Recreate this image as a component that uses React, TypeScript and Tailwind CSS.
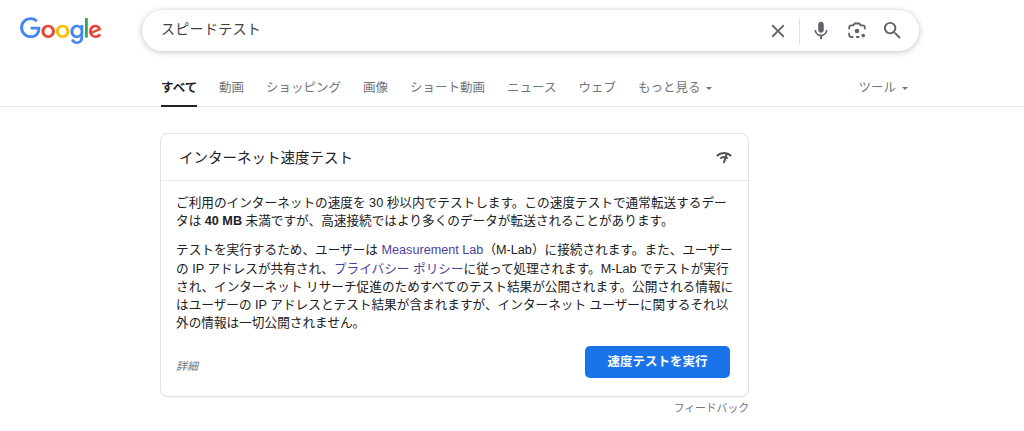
import React from "react";

const Logo = () => (
  <svg viewBox="0 0 272 92" className="w-[82px] h-[28px] shrink-0">
    <path fill="#EA4335" d="M115.75 47.18c0 12.77-9.99 22.18-22.25 22.18s-22.25-9.41-22.25-22.18C71.25 34.32 81.24 25 93.5 25s22.25 9.32 22.25 22.18zm-9.74 0c0-7.98-5.79-13.44-12.51-13.44S80.99 39.2 80.99 47.18c0 7.9 5.79 13.44 12.51 13.44s12.51-5.55 12.51-13.44z" />
    <path fill="#FBBC05" d="M163.75 47.18c0 12.77-9.99 22.18-22.25 22.18s-22.25-9.41-22.25-22.18c0-12.85 9.99-22.18 22.25-22.18s22.25 9.32 22.25 22.18zm-9.74 0c0-7.98-5.79-13.44-12.51-13.44s-12.51 5.46-12.51 13.44c0 7.9 5.79 13.44 12.51 13.44s12.51-5.55 12.51-13.44z" />
    <path fill="#4285F4" d="M209.75 26.34v39.82c0 16.38-9.66 23.07-21.08 23.07-10.75 0-17.22-7.19-19.66-13.07l8.48-3.53c1.51 3.61 5.21 7.87 11.17 7.87 7.31 0 11.84-4.51 11.84-13v-3.19h-.34c-2.18 2.69-6.38 5.04-11.68 5.04-11.09 0-21.25-9.66-21.25-22.09 0-12.52 10.16-22.26 21.25-22.26 5.29 0 9.49 2.35 11.68 4.96h.34v-3.61h9.25zm-8.56 20.92c0-7.81-5.21-13.52-11.84-13.52-6.72 0-12.35 5.71-12.35 13.52 0 7.73 5.63 13.36 12.35 13.36 6.63 0 11.84-5.63 11.84-13.36z" />
    <path fill="#34A853" d="M225 3v65h-9.5V3h9.5z" />
    <path fill="#EA4335" d="M262.02 54.48l7.56 5.04c-2.44 3.61-8.32 9.83-18.48 9.83-12.6 0-22.01-9.74-22.01-22.18 0-13.19 9.49-22.18 20.92-22.18 11.51 0 17.14 9.16 18.98 14.11l1.01 2.52-29.65 12.28c2.27 4.45 5.8 6.72 10.75 6.72 4.96 0 8.4-2.44 10.92-6.14zm-23.27-7.98l19.82-8.23c-1.09-2.77-4.37-4.7-8.23-4.7-4.95 0-11.84 4.37-11.59 12.93z" />
    <path fill="#4285F4" d="M35.29 41.41V32H67c.31 1.64.47 3.58.47 5.68 0 7.06-1.93 15.79-8.15 22.01-6.05 6.3-13.78 9.66-24.02 9.66C16.32 69.35.36 53.89.36 34.91.36 15.93 16.32.47 35.3.47c10.5 0 17.98 4.12 23.6 9.49l-6.64 6.64c-4.03-3.78-9.49-6.72-16.97-6.72-13.86 0-24.7 11.17-24.7 25.03 0 13.86 10.84 25.03 24.7 25.03 8.99 0 14.11-3.61 17.39-6.89 2.66-2.66 4.41-6.46 5.1-11.65l-22.49.01z" />
  </svg>
);

const Caret = () => <span className="inline-block w-0 h-0 border-x-[3px] border-x-transparent border-t-[3.5px] border-t-[#70757a] ml-[6px] mb-[2px]" />;

const tabs = ["動画", "ショッピング", "画像", "ショート動画", "ニュース", "ウェブ"];

export default function App() {
  return (
    <div className="w-[1024px] h-[431px] overflow-hidden bg-white text-[#202124]" style={{ fontFamily: '"Liberation Sans", "Noto Sans CJK JP", sans-serif' }}>
      <div className="flex items-center pl-[20px] pt-[10px]">
        <Logo />
        <div className="ml-[40px] w-[777px] h-[41px] rounded-full bg-white shadow-[0_1px_6px_rgba(32,33,36,0.28)] flex items-center pl-[19px] pr-[15px]">
          <span className="text-[14px] tracking-[0.3px] text-[#3c4043] flex-1 -mt-[2px]">スピードテスト</span>
          <svg viewBox="0 0 24 24" className="w-[22px] h-[22px] text-[#5f6368]" fill="currentColor"><path d="M19 6.41 17.59 5 12 10.59 6.41 5 5 6.41 10.59 12 5 17.59 6.41 19 12 13.41 17.59 19 19 17.59 13.41 12z" /></svg>
          <div className="w-px h-[26px] bg-[#dfe1e5] ml-[10px] mr-[10px]" />
          <svg viewBox="0 0 24 24" className="w-[22px] h-[22px] text-[#5f6368]" fill="currentColor"><path d="M12 14c1.66 0 3-1.34 3-3V5c0-1.66-1.34-3-3-3S9 3.34 9 5v6c0 1.66 1.34 3 3 3z" /><path d="M17.3 11c0 3-2.54 5.1-5.3 5.1S6.7 14 6.7 11H5c0 3.41 2.72 6.23 6 6.72V21h2v-3.28c3.28-.48 6-3.3 6-6.72h-1.7z" /></svg>
          <svg viewBox="0 0 24 24" className="w-[22px] h-[22px] ml-[14px] text-[#5f6368]" fill="none" stroke="currentColor" strokeWidth="2"><path d="M3.5 10V8a2.2 2.2 0 0 1 2.2-2.2H8L9.5 3.8h5L16 5.8h2.3A2.2 2.2 0 0 1 20.5 8v2M3.5 14v2.3a2.2 2.2 0 0 0 2.2 2.2H8M11 18.5h3.5" /><circle cx="12" cy="12" r="2.5" fill="currentColor" stroke="none" /><circle cx="18.8" cy="17" r="2" fill="currentColor" stroke="none" /></svg>
          <svg viewBox="0 0 24 24" className="w-[23px] h-[23px] ml-[13px] text-[#5f6368]" fill="currentColor"><path d="M15.5 14h-.79l-.28-.27A6.471 6.471 0 0 0 16 9.5 6.5 6.5 0 1 0 9.5 16c1.61 0 3.09-.59 4.23-1.57l.27.28v.79l5 4.99L20.49 19l-4.99-5zm-6 0C7.01 14 5 11.99 5 9.5S7.01 5 9.5 5 14 7.01 14 9.5 11.99 14 9.5 14z" /></svg>
        </div>
      </div>

      <div className="mt-[19px] h-[37px] border-b border-[#e8eaed] flex pl-[161px] pr-[116px] text-[12.5px] text-[#70757a]">
        <div className="h-[37px] border-b-[2px] border-[#202124] text-[#202124] font-bold pt-[9px] leading-[18px] w-[36px] whitespace-nowrap">すべて</div>
        {tabs.map((t) => (
          <div key={t} className="ml-[22px] pt-[9px] leading-[18px] whitespace-nowrap">{t}</div>
        ))}
        <div className="ml-[22px] pt-[9px] leading-[18px] whitespace-nowrap">もっと見る<Caret /></div>
        <div className="ml-auto pt-[9px] leading-[18px] whitespace-nowrap">ツール<Caret /></div>
      </div>

      <div className="ml-[160px] mt-[26px] w-[589px]">
        <div className="h-[264px] rounded-[8px] border border-[#dfe1e5] shadow-[0_1px_1px_rgba(60,64,67,0.06)] bg-white">
          <div className="h-[47px] border-b border-[#e8eaed] flex items-center justify-between pl-[18px] pr-[15px]">
            <span className="text-[14.5px] text-[#202124] mt-[3px]">インターネット速度テスト</span>
            <svg viewBox="0 0 24 24" className="w-[18px] h-[18px] text-[#4d5156]" fill="none" stroke="currentColor">
              <path d="M2.5 10.5C8 5.5 16 5.5 21.5 10.5" strokeWidth="2.8" />
              <path d="M7 14c3-2.5 7-2.5 10 0" strokeWidth="2.6" />
              <path d="M15.5 8 12 19" strokeWidth="2.8" strokeLinecap="round" />
            </svg>
          </div>
          <div className="pl-[15px] pr-[14px] pt-[13px] text-[12.65px] leading-[18.2px] text-[#202124] whitespace-nowrap">
            <p>
              ご利用のインターネットの速度を 30 秒以内でテストします。この速度テストで通常転送するデー<br />
              タは <b>40 MB</b> 未満ですが、高速接続ではより多くのデータが転送されることがあります。
            </p>
            <p className="mt-[11px]">
              テストを実行するため、ユーザーは <span className="text-[#4b3f9f]">Measurement Lab</span>（M-Lab）に接続されます。また、ユーザー<br />
              の IP アドレスが共有され、<span className="text-[#4b3f9f]">プライバシー ポリシー</span>に従って処理されます。M-Lab でテストが実行<br />
              され、インターネット リサーチ促進のためすべてのテスト結果が公開されます。公開される情報に<br />
              はユーザーの IP アドレスとテスト結果が含まれますが、インターネット ユーザーに関するそれ以<br />
              外の情報は一切公開されません。
            </p>
            <div className="flex items-center justify-between mt-[14px] pr-[4px]">
              <span className="text-[11px] italic text-[#70757a] mt-[7px]">詳細</span>
              <button className="w-[145px] h-[32px] rounded-[5px] bg-[#1a73e8] text-white text-[12.5px] font-bold">速度テストを実行</button>
            </div>
          </div>
        </div>
        <div className="text-right text-[10.8px] text-[#70757a] mt-[3px]">フィードバック</div>
      </div>
    </div>
  );
}
